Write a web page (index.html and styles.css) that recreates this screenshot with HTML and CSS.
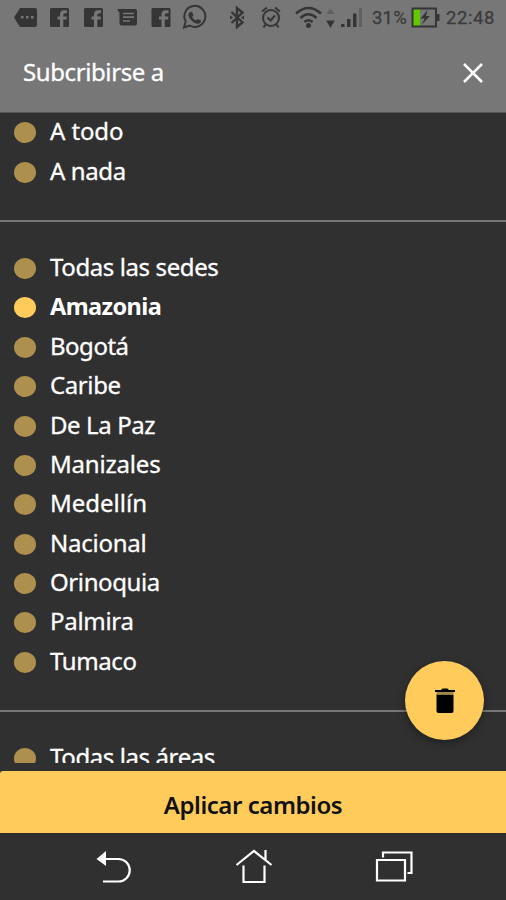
FILE: index.html
```html
<!DOCTYPE html>
<html lang="es">
<head>
<meta charset="utf-8">
<title>Subcribirse a</title>
<link rel="stylesheet" href="styles.css">
</head>
<body>
<div class="screen">
  <header class="top">
    <div class="status">
      <svg class="status-icons" width="506" height="38" viewBox="0 0 506 38">
        <path class="ink" d="M14 17.500l6-9.500h15q2 0 2 2v15q0 2-2 2h-15z"/>
        <path class="hole" d="M21 16h2.500v2.500H21zM26 16h2.500v2.500H26zM31 16h2.500v2.500H31z"/>
        <g id="fb"><rect class="ink" x="50" y="8" width="19" height="19" rx="1.500"/><path class="hole" d="M60 27v-7.500h-2.500v-3H60v-2q0-4.200 4.200-4.200H67v3h-2q-1.700 0-1.700 1.700v1.500H67l-.5 3h-3.200V27z"/></g>
        <use href="#fb" x="34"/>
        <use href="#fb" x="101.500"/>
        <path class="ink" d="M117 9h18q2 0 2 2v12.500q0 2-2 2h-13.500q-2 0-2-2V13z"/>
        <path class="hole-line" d="M123 13.500h11M123 17.200h11M123 21h7"/>
        <path class="line" d="M184 27.500l1.700-6a10.500 10.500 0 1 1 4 4z"/>
        <path class="ink" d="M190 12.300l2-.6 1.500 3.500-1.400 1.700q1.500 2.700 4 3.700l1.700-1.700 3.400 1.800q-.4 3-3.500 3-3.500 0-6.600-3.600-4.800-5.500-1.100-7.800z"/>
        <path class="line bt" d="M231.500 12l11 10.500-5.500 4.500V8l5.500 4.500-11 10.500"/>
        <path class="ink" d="M230 15.500l3 2-3 2zM244 15.500l-3 2 3 2z"/>
        <circle class="line" cx="271" cy="18" r="8"/>
        <path class="line" d="M262 11.500l5-4M280 11.500l-5-4M265.500 24.500l-2 3M276.500 24.500l2 3M267.500 17.500l3 3 4.500-5"/>
        <path class="line wifi" d="M296 13.500q12.500-11 25 0M300.500 18q8-7.500 16 0M304.500 22q4-3.500 8 0"/>
        <circle class="ink" cx="308.500" cy="25.500" r="2.500"/>
        <path class="dim" d="M330.500 8.500l4 5.500h-8z"/>
        <path class="ink" d="M330.500 28l4.300-7.500h-8.600z"/>
        <path class="ink" d="M341 24h3.500v3H341zM347 19h3.500v8H347zM353 13.500h3.500V27H353z"/>
        <path class="dim" d="M359 8h3v19h-3z"/>
        <path class="charge" d="M413 9h7v17h-7z"/>
        <path class="line" d="M412.500 8.500h23.500v18H412.500z"/>
        <path class="ink" d="M436 14h3.500v7H436zM427.500 10l-7 8.500h4l-2.500 6 8-8.500h-4z"/>
      </svg>
      <span class="percent">31%</span>
      <span class="clock">22:48</span>
    </div>
    <div class="title-row">
      <h1>Subcribirse a</h1>
      <svg class="close" width="20" height="20" viewBox="0 0 20 20"><path d="M1 1l18 18M19 1L1 19"/></svg>
    </div>
  </header>

  <main class="content">
    <ul class="group">
      <li><span class="t-todo">A todo</span></li>
      <li><span class="t-nada">A nada</span></li>
    </ul>
    <ul class="group">
      <li><span class="t-sedes">Todas las sedes</span></li>
      <li class="selected"><span class="t-amazonia">Amazonia</span></li>
      <li><span class="t-bogota">Bogotá</span></li>
      <li><span class="t-caribe">Caribe</span></li>
      <li><span class="t-paz">De La Paz</span></li>
      <li><span class="t-manizales">Manizales</span></li>
      <li><span class="t-medellin">Medellín</span></li>
      <li><span class="t-nacional">Nacional</span></li>
      <li><span class="t-orinoquia">Orinoquia</span></li>
      <li><span class="t-palmira">Palmira</span></li>
      <li><span class="t-tumaco">Tumaco</span></li>
    </ul>
    <ul class="group">
      <li><span class="t-areas">Todas las áreas</span></li>
    </ul>
  </main>

  <button class="apply"><span>Aplicar cambios</span></button>

  <nav class="nav">
    <svg width="506" height="67" viewBox="0 0 506 67">
      <path class="stroke" d="M103 26h15.500a11.200 11.200 0 0 1 0 22.500H103"/>
      <path class="fill" d="M96.500 26l9.500-8v15z"/>
      <path class="stroke" d="M236.500 32L254 18l17.500 14M243.500 32.500V49h21V32.500M265.500 17v10"/>
      <path class="stroke" d="M377 27h28v20.500h-28zM383 24.500V19.500h28.500v20.500h-4"/>
    </svg>
  </nav>

  <button class="fab" aria-label="Eliminar">
    <svg width="20" height="26" viewBox="0 0 20 26"><path d="M0 2h6l1.500-1.500h5L14 2h6v2H0zM1.500 6.500h17V23q0 2-2 2h-13q-2 0-2-2z"/><path class="gap" d="M1.500 4h17v2.500h-17z"/></svg>
  </button>
</div>
</body>
</html>
```

FILE: styles.css
```css
* { box-sizing: border-box; }
body {
  margin: 0;
  background: #303030;
  color: #fff;
  font-family: "Noto Sans", sans-serif;
}
.screen {
  position: relative;
  display: flex;
  flex-direction: column;
  width: 506px;
  height: 900px;
  overflow: hidden;
}
.top { height: 113px; background: #777; border-bottom: 1px solid #555; flex: none; }
.status {
  position: relative;
  height: 38px;
  color: #3b3b3b;
  font: 18.500px/37px Roboto, sans-serif;
}
.status-icons { display: block; }
.percent, .clock { position: absolute; top: 0; white-space: nowrap; -webkit-text-stroke: 0.300px; }
.percent { left: 372px; letter-spacing: 0.200px; }
.clock { left: 446px; letter-spacing: 0.600px; }
.ink { fill: #353535; }
.dim { fill: #606060; }
.hole { fill: #777; }
.charge { fill: #62c900; }
.hole-line { stroke: #777; stroke-width: 1.700; }
.line { fill: none; stroke: #353535; stroke-width: 2; }
.bt { stroke-width: 2.400; }
.wifi { stroke-width: 2.600; }
.title-row {
  display: flex;
  align-items: center;
  justify-content: space-between;
  height: 70px;
  padding: 0 23px;
}
h1 { margin: 0; padding-bottom: 2px; font-size: 24px; font-weight: 400; line-height: 30px; letter-spacing: -0.400px; -webkit-text-stroke: 0.300px; }
.close { fill: none; stroke: #fff; stroke-width: 2.500; }
.content { height: 650px; overflow: hidden; flex: none; }
.group {
  list-style: none;
  margin: 0;
  padding: 0 0 28px;
}
.group + .group { border-top: 2px solid #777; padding-top: 27px; }
.group li {
  display: flex;
  align-items: center;
  gap: 14px;
  height: 39.400px;
  padding-left: 14px;
  font-size: 24px;
  line-height: 36px;
  letter-spacing: -0.400px;
  white-space: nowrap;
  -webkit-text-stroke: 0.300px;
}
.group li::before {
  content: "";
  width: 22px;
  height: 21px;
  border-radius: 50%;
  background: #ae904e;
}
.group li span { padding-bottom: 3px; }
.group .t-todo { letter-spacing: -0.100px; }
.group .t-manizales { letter-spacing: -0.200px; }
.group .t-medellin { letter-spacing: 0; }
.group .t-nacional { letter-spacing: -0.250px; }
.group .t-palmira { letter-spacing: -0.300px; }
.group .t-bogota { letter-spacing: -0.500px; }
.group .selected { font-size: 23.500px; font-weight: 700; letter-spacing: -0.600px; -webkit-text-stroke: 0; }
.group .selected::before { background: #ffcc5c; }
.apply {
  display: flex;
  align-items: center;
  justify-content: center;
  height: 62px;
  margin: 8px 0 0;
  padding: 5px 0 0;
  border: 0;
  border-radius: 3px 0 0 0;
  background: #ffcc5c;
  color: #111;
  font: 600 24px/32px "Noto Sans", sans-serif;
  letter-spacing: -0.450px;
  flex: none;
}
.nav { height: 67px; }
.nav svg { display: block; }
.stroke { fill: none; stroke: #fff; stroke-width: 2.200; }
.fill { fill: #fff; }
.fab {
  position: absolute;
  left: 405px;
  top: 661px;
  display: flex;
  align-items: center;
  justify-content: center;
  width: 79px;
  height: 79px;
  padding: 0;
  border: 0;
  border-radius: 50%;
  background: #ffcc5c;
  box-shadow: 0 3px 8px rgba(0, 0, 0, 0.350);
}
.gap { fill: #a3864b; }
```
